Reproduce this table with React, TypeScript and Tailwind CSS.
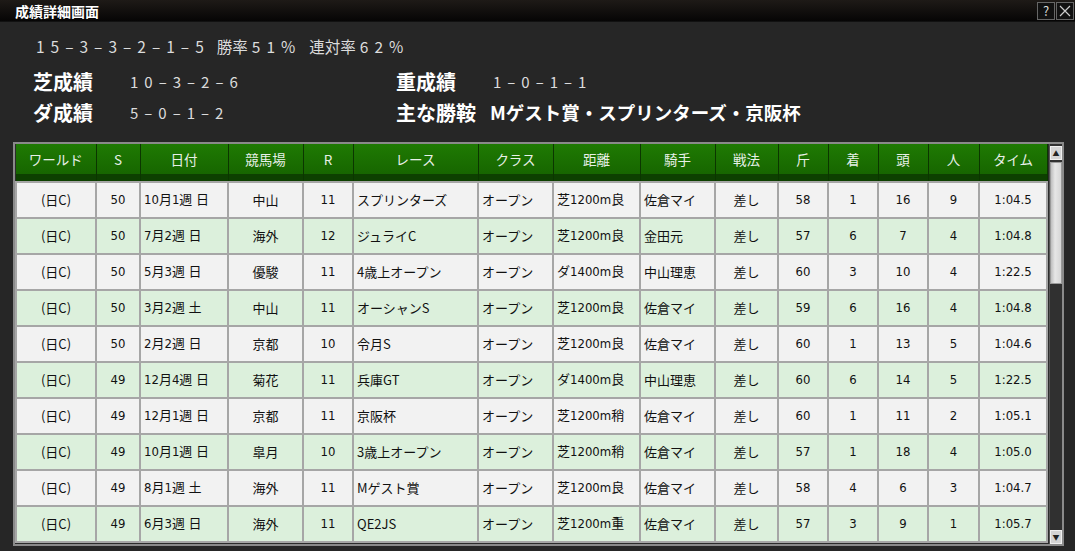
const jp = "font-['Noto_Sans_CJK_JP','Noto_Sans',sans-serif]"
const narrow = "font-['DejaVu_Sans_Condensed','Liberation_Sans_Narrow','Noto_Sans_CJK_JP',sans-serif]"

const columns = [
  { name: "ワールド", w: "w-[80px]", align: "center" },
  { name: "S", w: "w-[44px]", align: "center", num: true },
  { name: "日付", w: "w-[88px]", align: "left", num: true },
  { name: "競馬場", w: "w-[75px]", align: "center" },
  { name: "R", w: "w-[50px]", align: "center", num: true },
  { name: "レース", w: "w-[125px]", align: "left" },
  { name: "クラス", w: "w-[75px]", align: "left" },
  { name: "距離", w: "w-[87px]", align: "left", num: true },
  { name: "騎手", w: "w-[75px]", align: "left" },
  { name: "戦法", w: "w-[63px]", align: "center" },
  { name: "斤", w: "w-[50px]", align: "center", num: true },
  { name: "着", w: "w-[50px]", align: "center", num: true },
  { name: "頭", w: "w-[50px]", align: "center", num: true },
  { name: "人", w: "w-[51px]", align: "center", num: true },
  { name: "タイム", w: "w-[68px]", align: "center", num: true },
]

const rows = [
  ["(日C)", "50", "10月1週 日", "中山", "11", "スプリンターズ", "オープン", "芝1200m良", "佐倉マイ", "差し", "58", "1", "16", "9", "1:04.5"],
  ["(日C)", "50", "7月2週 日", "海外", "12", "ジュライC", "オープン", "芝1200m良", "金田元", "差し", "57", "6", "7", "4", "1:04.8"],
  ["(日C)", "50", "5月3週 日", "優駿", "11", "4歳上オープン", "オープン", "ダ1400m良", "中山理恵", "差し", "60", "3", "10", "4", "1:22.5"],
  ["(日C)", "50", "3月2週 土", "中山", "11", "オーシャンS", "オープン", "芝1200m良", "佐倉マイ", "差し", "59", "6", "16", "4", "1:04.8"],
  ["(日C)", "50", "2月2週 日", "京都", "10", "令月S", "オープン", "芝1200m良", "佐倉マイ", "差し", "60", "1", "13", "5", "1:04.6"],
  ["(日C)", "49", "12月4週 日", "菊花", "11", "兵庫GT", "オープン", "ダ1400m良", "中山理恵", "差し", "60", "6", "14", "5", "1:22.5"],
  ["(日C)", "49", "12月1週 日", "京都", "11", "京阪杯", "オープン", "芝1200m稍", "佐倉マイ", "差し", "60", "1", "11", "2", "1:05.1"],
  ["(日C)", "49", "10月1週 日", "皐月", "10", "3歳上オープン", "オープン", "芝1200m稍", "佐倉マイ", "差し", "57", "1", "18", "4", "1:05.0"],
  ["(日C)", "49", "8月1週 土", "海外", "11", "Mゲスト賞", "オープン", "芝1200m良", "佐倉マイ", "差し", "58", "4", "6", "3", "1:04.7"],
  ["(日C)", "49", "6月3週 日", "海外", "11", "QE2JS", "オープン", "芝1200m重", "佐倉マイ", "差し", "57", "3", "9", "1", "1:05.7"],
]

function Spaced({ text, className = "" }: { text: string; className?: string }) {
  return <span className={`tracking-[6px] pl-[3px] ${className}`}>{text}</span>
}

export default function App() {
  return (
    <div className={`w-[1075px] h-[551px] bg-[#262626] flex flex-col overflow-hidden ${jp}`}>
      {/* Title bar */}
      <div className="h-[22px] shrink-0 flex items-center justify-between bg-[linear-gradient(to_bottom,#1e1a17,#060505)] border-b border-[#111]">
        <span className="pl-[15px] text-[14px] font-bold text-white leading-none">成績詳細画面</span>
        <div className="flex gap-[1px] pr-[1px]">
          <div className="w-[18px] h-[18px] border border-[#666] bg-[#111] text-[#ddd] text-[13px] leading-[16px] text-center">?</div>
          <div className="w-[18px] h-[18px] border border-[#666] bg-[#111] flex items-center justify-center">
            <svg width="12" height="12" viewBox="0 0 12 12" stroke="#ccc" strokeWidth="1.2">
              <path d="M1 1L11 11M11 1L1 11" />
            </svg>
          </div>
        </div>
      </div>

      {/* Summary */}
      <div className="pl-[33px] pt-[14px] text-[15.5px] text-[#dcdcdc] leading-[20px] flex">
        <Spaced text="15–3–3–2–1–5" />
        <span className="ml-[7px]">勝率</span>
        <Spaced text="51%" className="ml-[1px]" />
        <span className="ml-[8px]">連対率</span>
        <Spaced text="62%" className="ml-[1px]" />
      </div>
      <div className="pl-[33px] pt-[10px] grid grid-cols-[94px_269px_94px_1fr] items-center text-white leading-[31px]">
        <span className="text-[20px] font-bold">芝成績</span>
        <span className="text-[15px] text-[#dcdcdc]"><Spaced text="10–3–2–6" /></span>
        <span className="text-[20px] font-bold">重成績</span>
        <span className="text-[15px] text-[#dcdcdc]"><Spaced text="1–0–1–1" /></span>
        <span className="text-[20px] font-bold">ダ成績</span>
        <span className="text-[15px] text-[#dcdcdc]"><Spaced text="5–0–1–2" /></span>
        <span className="text-[20px] font-bold">主な勝鞍</span>
        <span className="text-[18.5px] font-bold">Mゲスト賞・スプリンターズ・京阪杯</span>
      </div>

      {/* Table */}
      <div className="ml-[13px] mt-[14px] w-[1051px] h-[404px] border-2 border-[#8a8a8a] flex bg-[#2c2c2c]">
        <table className="table-fixed border-collapse w-[1031px] h-fit">
          <thead>
            <tr className="h-[38px] bg-[linear-gradient(to_bottom,#1f7a03_0%,#176600_78%,#0d4000_80%,#0d4000_100%)]">
              {columns.map((c) => (
                <th
                  key={c.name}
                  className={`${c.w} p-0 pb-[6px] text-[13.5px] font-normal text-[#e8f0e8] text-center border-r border-[#0b3600]`}
                >
                  {c.name}
                </th>
              ))}
            </tr>
          </thead>
          <tbody>
            {rows.map((r, i) => (
              <tr key={i} className={`h-[36px] ${i % 2 === 0 ? "bg-[#f2f2f2]" : "bg-[#dcf0dc]"}`}>
                {r.map((v, j) => {
                  const c = columns[j]
                  return (
                    <td
                      key={j}
                      className={`p-0 text-[13px] text-[#111] border-2 border-[#a6a6a6] whitespace-nowrap ${
                        c.align === "left" ? "text-left pl-[3px]" : "text-center"
                      } ${c.num ? narrow : ""}`}
                    >
                      {v}
                    </td>
                  )
                })}
              </tr>
            ))}
          </tbody>
        </table>

        {/* Scrollbar */}
        <div className="w-[16px] ml-[1px] flex flex-col bg-[#303030] border-l border-[#555]">
          <div className="mt-[2px] h-[14px] bg-[#d4d4d4] border border-[#f0f0f0] flex items-center justify-center text-[7px] text-[#222] leading-none">▲</div>
          <div className="mt-[2px] h-[122px] bg-[linear-gradient(to_right,#bdbdbd,#e6e6e6_40%,#d6d6d6)] border border-[#999]" />
          <div className="flex-1" />
          <div className="h-[14px] bg-[#d4d4d4] border border-[#f0f0f0] flex items-center justify-center text-[7px] text-[#222] leading-none">▼</div>
        </div>
      </div>
    </div>
  )
}
